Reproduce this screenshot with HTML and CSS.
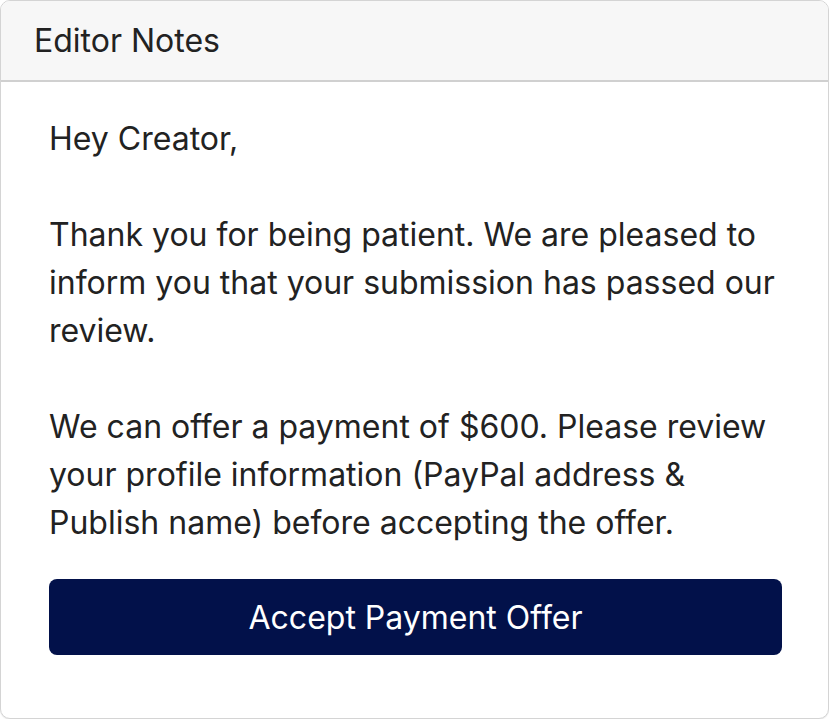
FILE: index.html
```html
<!DOCTYPE html>
<html lang="en">
<head>
    <meta charset="UTF-8">
    <meta name="viewport" content="width=device-width, initial-scale=1.0">
    <title>Editor Notes</title>
    <link rel="stylesheet" href="styles.css">
</head>
<body>
    <div class="card">
        <div class="card-header">Editor Notes</div>
        <div class="card-body">
            <p class="note">
                Hey Creator,<br><br>
                Thank you for being patient. We are pleased to inform you that your submission has passed our review.<br><br>
                We can offer a payment of $600. Please review your profile information (PayPal address &amp; Publish name) before accepting the offer.
            </p>
            <button class="accept-btn">Accept Payment Offer</button>
        </div>
    </div>
</body>
</html>
```

FILE: styles.css
```css
body {
    margin: 0;
    font-family: Inter, "Noto Sans", sans-serif;
    background: #fff;
}

.card {
    width: 829px;
    height: 719px;
    box-sizing: border-box;
    border: 1px solid #d4d4d4;
    border-radius: 10px;
    overflow: hidden;
    background: #fff;
    box-shadow: 0 1px 1px rgba(0, 0, 0, 0.08);
}

.card-header {
    height: 81px;
    box-sizing: border-box;
    padding: 0 33px;
    display: flex;
    align-items: center;
    background: #f7f7f7;
    border-bottom: 2px solid #d0d0d0;
    font-size: 32px;
    color: #222;
}

.card-body {
    padding: 33px 46px 0 48px;
}

.note {
    margin: 0;
    font-size: 32px;
    line-height: 48px;
    color: #222;
}

.accept-btn {
    display: block;
    width: 100%;
    height: 76px;
    margin-top: 32px;
    border: none;
    border-radius: 8px;
    background: #02114a;
    color: #fff;
    font-family: Inter, "Noto Sans", sans-serif;
    font-size: 32px;
    cursor: pointer;
}
```
